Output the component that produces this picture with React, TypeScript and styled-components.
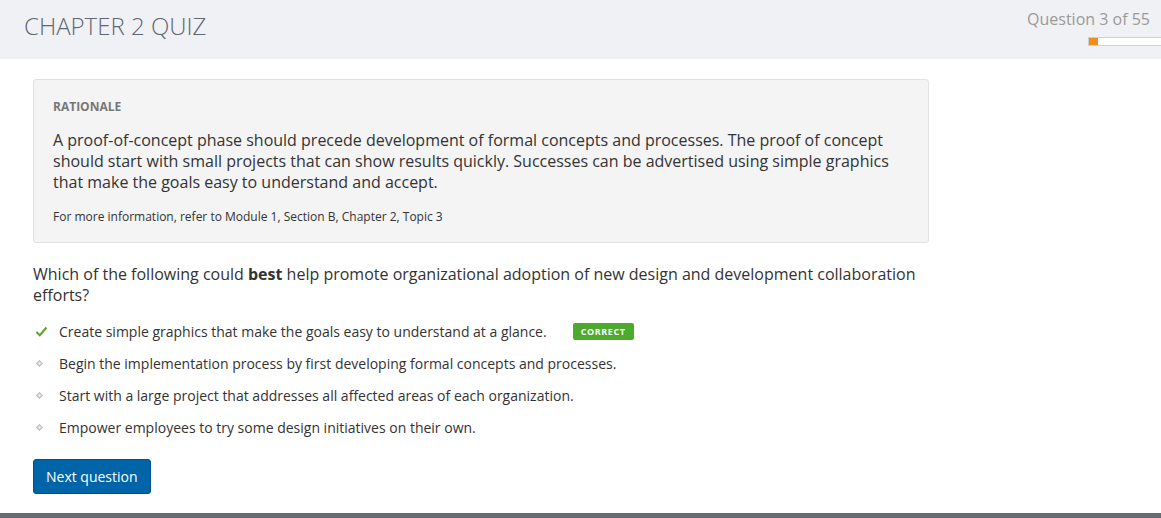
import styled, { createGlobalStyle } from 'styled-components';

const GlobalStyle = createGlobalStyle`
  html, body {
    margin: 0;
    padding: 0;
    background: #ffffff;
    font-family: "Open Sans", "Noto Sans", sans-serif;
  }
`;

const Page = styled.div`
  width: 1161px;
  height: 518px;
  display: flex;
  flex-direction: column;
  overflow: hidden;
`;

const Header = styled.header`
  height: 59px;
  background: #f0f1f5;
  display: flex;
  justify-content: space-between;
  align-items: flex-start;
  flex-shrink: 0;
`;

const Title = styled.h1`
  margin: 10px 0 0 24px;
  font-size: 24px;
  font-weight: 300;
  color: #5f6771;
  line-height: 32px;
`;

const Progress = styled.div`
  display: flex;
  flex-direction: column;
  align-items: flex-end;
  padding-top: 8px;
`;

const Counter = styled.div`
  font-size: 16px;
  color: #9a9a9a;
  line-height: 22px;
  margin-right: 11px;
`;

const Track = styled.div`
  margin-top: 7px;
  width: 72px;
  height: 7px;
  background: #ffffff;
  border: 1px solid #cfcfcf;
  border-right: none;
  display: flex;
`;

const Fill = styled.div`
  height: 100%;
  background: #f28c1c;
`;

const Main = styled.main`
  flex: 1;
  width: 896px;
  padding: 20px 0 0 33px;
`;

const Rationale = styled.section`
  background: #f4f4f4;
  border: 1px solid #e2e2e2;
  border-radius: 3px;
  padding: 19px 19px 17px;
`;

const Label = styled.div`
  font-size: 12px;
  font-weight: 700;
  color: #777777;
  line-height: 16px;
`;

const Body = styled.p`
  margin: 15px 0 0;
  font-size: 16px;
  line-height: 21px;
  color: #333333;
`;

const Reference = styled.p`
  margin: 16px 0 0;
  font-size: 12px;
  line-height: 16px;
  color: #333333;
`;

const Question = styled.p`
  margin: 21px 0 0;
  font-size: 16px;
  line-height: 21px;
  color: #333333;

  b {
    font-weight: 700;
  }
`;

const Options = styled.ul`
  list-style: none;
  margin: 9px 0 0;
  padding: 0;
`;

const Option = styled.li`
  display: flex;
  align-items: center;
  height: 32px;
  font-size: 14px;
  color: #333333;
`;

const Marker = styled.span`
  width: 26px;
  display: flex;
  align-items: center;
  justify-content: flex-start;
  padding-left: 2px;
  box-sizing: border-box;
`;

const Diamond = styled.span`
  width: 3px;
  height: 3px;
  margin-left: 2px;
  background: #e6e6e6;
  border: 1px solid #bdbdbd;
  transform: rotate(45deg);
`;

const Badge = styled.span`
  margin-left: 26px;
  background: #4caa2c;
  color: #ffffff;
  font-size: 9px;
  font-weight: 700;
  letter-spacing: 0.6px;
  border-radius: 2px;
  padding: 0 8px;
  height: 17px;
  line-height: 17px;
`;

const NextButton = styled.button`
  margin-top: 16px;
  background: #0064a8;
  border: 1px solid #00508a;
  border-radius: 3px;
  color: #ffffff;
  font-family: inherit;
  font-size: 14px;
  height: 35px;
  padding: 0 12px;
  cursor: pointer;
`;

const Footer = styled.div`
  height: 5px;
  background: #656d74;
  flex-shrink: 0;
`;

const Check = () => (
  <svg width="13" height="11" viewBox="0 0 13 11">
    <path d="M1.5 6 L4.8 9.2 L11.5 1.5" fill="none" stroke="#59a52c" strokeWidth="2" />
  </svg>
);

const options = [
  { text: 'Create simple graphics that make the goals easy to understand at a glance.', correct: true },
  { text: 'Begin the implementation process by first developing formal concepts and processes.', correct: false },
  { text: 'Start with a large project that addresses all affected areas of each organization.', correct: false },
  { text: 'Empower employees to try some design initiatives on their own.', correct: false },
];

const App = () => {
  const current = 3;
  const total = 55;

  return (
    <Page>
      <GlobalStyle />
      <Header>
        <Title>CHAPTER 2 QUIZ</Title>
        <Progress>
          <Counter>Question {current} of {total}</Counter>
          <Track>
            <Fill style={{ width: `${Math.round((current / total) * 160)}px` }} />
          </Track>
        </Progress>
      </Header>
      <Main>
        <Rationale>
          <Label>RATIONALE</Label>
          <Body>
            A proof-of-concept phase should precede development of formal concepts and processes. The proof of concept
            should start with small projects that can show results quickly. Successes can be advertised using simple
            graphics that make the goals easy to understand and accept.
          </Body>
          <Reference>For more information, refer to Module 1, Section B, Chapter 2, Topic 3</Reference>
        </Rationale>
        <Question>
          Which of the following could <b>best</b> help promote organizational adoption of new design and development
          collaboration efforts?
        </Question>
        <Options>
          {options.map((o) => (
            <Option key={o.text}>
              <Marker>{o.correct ? <Check /> : <Diamond />}</Marker>
              {o.text}
              {o.correct && <Badge>CORRECT</Badge>}
            </Option>
          ))}
        </Options>
        <NextButton>Next question</NextButton>
      </Main>
      <Footer />
    </Page>
  );
};

export default App;
